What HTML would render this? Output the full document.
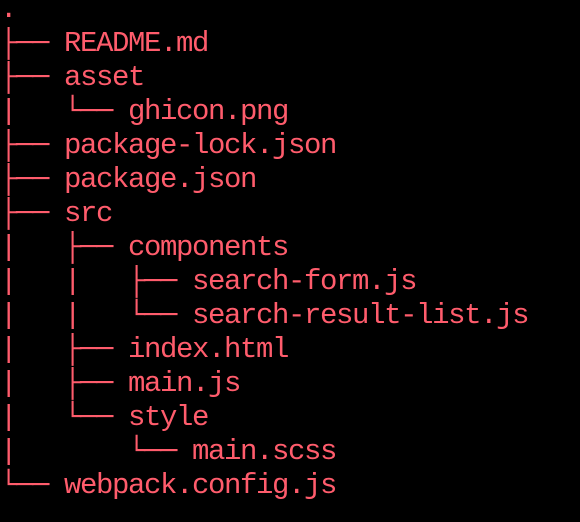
<!DOCTYPE html>
<html><head><meta charset="utf-8"><style>
html,body{margin:0;padding:0;background:#000;width:580px;height:522px;overflow:hidden}
pre{margin:-7px 0 0 0;padding:0;font-family:"Liberation Mono","DejaVu Sans Mono",monospace;font-size:29px;letter-spacing:-1.4px;line-height:34px;color:#ff5c6c;}
</style></head><body><pre>.
├── README.md
├── asset
|   └── ghicon.png
├── package-lock.json
├── package.json
├── src
|   ├── components
|   |   ├── search-form.js
|   |   └── search-result-list.js
|   ├── index.html
|   ├── main.js
|   └── style
|       └── main.scss
└── webpack.config.js</pre></body></html>
